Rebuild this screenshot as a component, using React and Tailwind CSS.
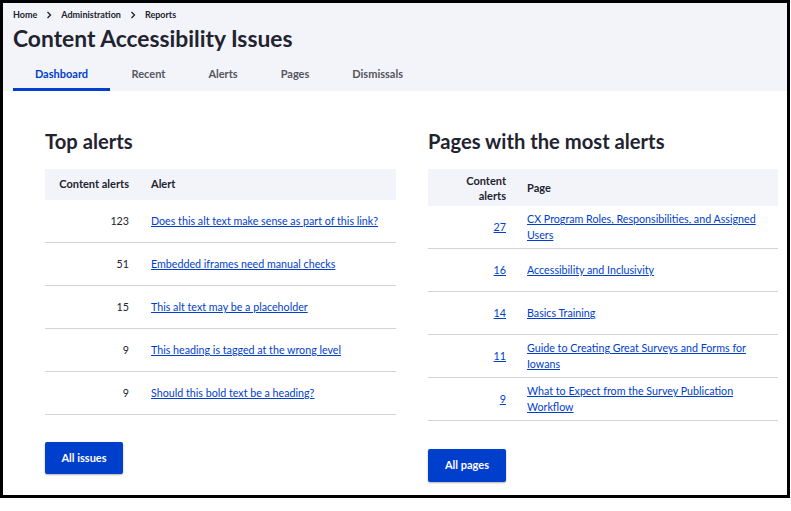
import React from "react";

const alerts = [
  ["123", "Does this alt text make sense as part of this link?"],
  ["51", "Embedded iframes need manual checks"],
  ["15", "This alt text may be a placeholder"],
  ["9", "This heading is tagged at the wrong level"],
  ["9", "Should this bold text be a heading?"],
];

const pages = [
  ["27", "CX Program Roles, Responsibilities, and Assigned Users"],
  ["16", "Accessibility and Inclusivity"],
  ["14", "Basics Training"],
  ["11", "Guide to Creating Great Surveys and Forms for Iowans"],
  ["9", "What to Expect from the Survey Publication Workflow"],
];

const tabs = ["Dashboard", "Recent", "Alerts", "Pages", "Dismissals"];

function Chevron() {
  return (
    <svg width="6" height="8" viewBox="0 0 6 8" className="mx-[9px]">
      <path d="M1.5 1 L4.5 4 L1.5 7" fill="none" stroke="#1f1f2b" strokeWidth="1.3" />
    </svg>
  );
}

export default function App() {
  return (
    <div className="w-[791px] h-[511px] bg-white font-['Lato',sans-serif] text-[#222330]">
      <div className="w-[790px] h-[498px] border-[3px] border-black overflow-hidden flex flex-col">
        <div className="bg-[#f3f4f9] px-[10px] pt-[7px]">
          <div className="flex items-center text-[9px] font-bold h-[10px]">
            <span>Home</span>
            <Chevron />
            <span>Administration</span>
            <Chevron />
            <span>Reports</span>
          </div>
          <h1 className="text-[22.8px] font-bold leading-[28px] mt-[4px]">
            Content Accessibility Issues
          </h1>
          <div className="flex mt-[9px] text-[11px] font-bold">
            {tabs.map((t, i) => (
              <div
                key={t}
                className={
                  i === 0
                    ? "h-[30px] flex items-center border-b-[3px] border-[#003ecc] text-[#003ecc] w-[97px] justify-center"
                    : "h-[30px] flex items-center px-[21.5px] text-[#545560] border-b-[3px] border-transparent"
                }
              >
                {t}
              </div>
            ))}
          </div>
        </div>
        <div className="flex pl-[42px] pt-[38px] gap-[32px] text-[10.7px]">
          <div className="w-[351px] flex flex-col">
            <h2 className="text-[20.2px] font-bold leading-[24px]">Top alerts</h2>
            <div className="mt-[16px] bg-[#f3f4f9] h-[31px] flex items-center font-bold text-[11px]">
              <div className="w-[84px] text-right">Content alerts</div>
              <div className="pl-[22px]">Alert</div>
            </div>
            {alerts.map(([n, t], i) => (
              <div key={i} className="h-[43px] flex items-center border-b border-[#d4d4d8]">
                <div className="w-[84px] text-right">{n}</div>
                <a href="#" className="pl-[22px] text-[#003ecc] underline">{t}</a>
              </div>
            ))}
            <div className="mt-[27px]">
              <button className="w-[78px] h-[32px] bg-[#003ecc] text-white font-bold text-[11px] rounded-[2px] shadow-[0_1px_2px_rgba(0,0,0,0.3)]">
                All issues
              </button>
            </div>
          </div>
          <div className="w-[350px] flex flex-col">
            <h2 className="text-[20.2px] font-bold leading-[24px]">Pages with the most alerts</h2>
            <div className="mt-[16px] bg-[#f3f4f9] h-[37px] flex items-center font-bold leading-[15px] text-[11px]">
              <div className="w-[78px] text-right">Content<br />alerts</div>
              <div className="pl-[21px]">Page</div>
            </div>
            {pages.map(([n, t], i) => (
              <div key={i} className="min-h-[43px] flex items-center border-b border-[#d4d4d8] leading-[16px] py-[5px]">
                <div className="w-[78px] text-right shrink-0">
                  <a href="#" className="text-[#003ecc] underline">{n}</a>
                </div>
                <div className="pl-[21px] pr-[10px]">
                  <a href="#" className="text-[#003ecc] underline">{t}</a>
                </div>
              </div>
            ))}
            <div className="mt-[28px]">
              <button className="w-[78px] h-[33px] bg-[#003ecc] text-white font-bold text-[11px] rounded-[2px] shadow-[0_1px_2px_rgba(0,0,0,0.3)]">
                All pages
              </button>
            </div>
          </div>
        </div>
      </div>
    </div>
  );
}
